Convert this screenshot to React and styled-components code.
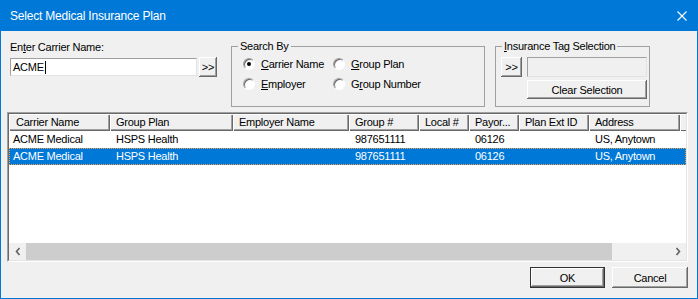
import React from "react";
import styled, { createGlobalStyle } from "styled-components";

const GlobalStyle = createGlobalStyle`
  * {
    box-sizing: border-box;
  }
  html, body {
    margin: 0;
    padding: 0;
    background: #f0f0f0;
  }
  body {
    font-family: "Liberation Sans", Arial, sans-serif;
    font-size: 11px;
    letter-spacing: -0.25px;
    color: #000;
  }
`;

const Window = styled.div`
  width: 698px;
  height: 299px;
  border: 1px solid #0078d7;
  display: flex;
  flex-direction: column;
  background: #f0f0f0;
`;

const TitleBar = styled.div`
  height: 30px;
  flex: none;
  background: #0078d7;
  color: #fff;
  display: flex;
  align-items: center;
  justify-content: space-between;
  padding-left: 9px;
  font-size: 12px;
  letter-spacing: -0.2px;
`;

const CloseBox = styled.div`
  width: 30px;
  height: 30px;
  display: flex;
  align-items: center;
  justify-content: center;
  margin-top: -1px;
`;

const Body = styled.div`
  flex: 1;
  display: flex;
  flex-direction: column;
  padding: 9px 9px 0 6px;
`;

const TopRow = styled.div`
  display: flex;
  align-items: flex-start;
  height: 67px;
`;

const CarrierBlock = styled.div`
  margin: 1px 0 0 3px;
  display: flex;
  flex-direction: column;
`;

const Label = styled.div`
  line-height: 13px;
  height: 13px;
`;

const Accel = styled.span`
  text-decoration: underline;
  text-underline-offset: 1px;
`;

const EntryRow = styled.div`
  margin-top: 3px;
  display: flex;
  align-items: center;
  gap: 2px;
`;

const EditBox = styled.div`
  width: ${({ $w }) => $w}px;
  height: ${({ $h }) => $h}px;
  background: ${({ $disabled }) => ($disabled ? "#f0f0f0" : "#fff")};
  border: 1px solid;
  border-color: #a0a0a0 #e3e3e3 #e3e3e3 #a0a0a0;
  display: flex;
  align-items: center;
  padding-left: 2px;
  line-height: 13px;
`;

const Caret = styled.span`
  display: inline-block;
  width: 1px;
  height: 13px;
  background: #000;
  margin-left: 1px;
`;

const Button = styled.button`
  font: inherit;
  letter-spacing: inherit;
  color: #000;
  background: #f0f0f0;
  padding: 0;
  width: ${({ $w }) => $w}px;
  height: ${({ $h }) => $h}px;
  border: ${({ $default }) => ($default ? "1px solid #333" : "none")};
  box-shadow: inset -1px -1px #696969, inset 1px 1px #fff,
    inset -2px -2px #a0a0a0, inset 2px 2px #f0f0f0;
  display: flex;
  align-items: center;
  justify-content: center;
  cursor: default;
`;

const Group = styled.fieldset`
  margin: 0 0 0 ${({ $ml }) => $ml}px;
  width: ${({ $w }) => $w}px;
  height: 67px;
  border: 1px solid #a0a0a0;
  padding: ${({ $pt }) => $pt}px 0 0 0;
  min-width: 0;
`;

const Legend = styled.legend`
  margin-left: 6px;
  padding: 0 2px;
  line-height: 13px;
`;

const RadioGrid = styled.div`
  margin-left: 11px;
  display: grid;
  grid-template-columns: 90px auto;
  row-gap: 4px;
`;

const RadioOption = styled.label`
  display: flex;
  align-items: center;
  gap: 6px;
  height: 16px;
`;

const RadioCircle = styled.span`
  width: 12px;
  height: 12px;
  border-radius: 50%;
  background: #fff;
  border: 1px solid;
  border-color: #a0a0a0 #fff #fff #a0a0a0;
  box-shadow: inset 1px 1px 0 #696969;
  display: flex;
  align-items: center;
  justify-content: center;
  &::after {
    content: "";
    width: 4px;
    height: 4px;
    border-radius: 50%;
    background: ${({ $checked }) => ($checked ? "#000" : "transparent")};
  }
`;

const TagGrid = styled.div`
  margin-left: 5px;
  display: grid;
  grid-template-columns: 21px 120px;
  column-gap: 5px;
  row-gap: 3px;
`;

const ListView = styled.div`
  margin-top: 5px;
  height: 150px;
  border: 1px solid;
  border-color: #a0a0a0 #fff #fff #a0a0a0;
  display: flex;
  flex-direction: column;
  background: #fff;
`;

const ListInner = styled.div`
  flex: 1;
  border: 1px solid;
  border-color: #696969 #e3e3e3 #e3e3e3 #696969;
  display: flex;
  flex-direction: column;
  overflow: hidden;
`;

const HeaderRow = styled.div`
  display: flex;
  height: 17px;
  flex: none;
  background: #f0f0f0;
`;

const HeaderCell = styled.div`
  width: ${({ $w }) => $w}px;
  flex: none;
  padding-left: ${({ $first }) => ($first ? 7 : 6)}px;
  line-height: 17px;
  white-space: nowrap;
  overflow: hidden;
  box-shadow: inset 1px 1px #fff, inset -1px -1px #696969,
    inset -2px -2px #a0a0a0;
`;

const HeaderRest = styled.div`
  flex: 1;
  box-shadow: inset 1px 1px #fff, inset 0 -1px #696969;
`;

const Row = styled.div`
  display: flex;
  height: 17px;
  flex: none;
  background: ${({ $selected }) => ($selected ? "#0078d7" : "#fff")};
  color: ${({ $selected }) => ($selected ? "#fff" : "#000")};
  outline: ${({ $selected }) => ($selected ? "1px dotted #f0a050" : "none")};
  outline-offset: -1px;
`;

const Cell = styled.div`
  width: ${({ $w }) => $w}px;
  flex: none;
  padding-left: ${({ $first }) => ($first ? 4 : 6)}px;
  line-height: 17px;
  white-space: nowrap;
  overflow: hidden;
`;

const ListSpace = styled.div`
  flex: 1;
  background: #fff;
`;

const ScrollBar = styled.div`
  height: 17px;
  flex: none;
  background: #f0f0f0;
  display: flex;
  align-items: stretch;
`;

const ScrollArrow = styled.div`
  width: 17px;
  flex: none;
  display: flex;
  align-items: center;
  justify-content: center;
`;

const Track = styled.div`
  flex: 1;
  display: flex;
  padding-right: 57px;
`;

const Thumb = styled.div`
  flex: 1;
  background: #cdcdcd;
`;

const Footer = styled.div`
  margin-top: 5px;
  display: flex;
  justify-content: flex-end;
  gap: 7px;
`;

const columns = [
  { key: "carrier", title: "Carrier Name", w: 101 },
  { key: "plan", title: "Group Plan", w: 123 },
  { key: "employer", title: "Employer Name", w: 116 },
  { key: "group", title: "Group #", w: 70 },
  { key: "local", title: "Local #", w: 50 },
  { key: "payor", title: "Payor...", w: 50 },
  { key: "ext", title: "Plan Ext ID", w: 70 },
  { key: "address", title: "Address", w: 91 },
];

const rows = [
  {
    carrier: "ACME Medical",
    plan: "HSPS Health",
    employer: "",
    group: "987651111",
    local: "",
    payor: "06126",
    ext: "",
    address: "US, Anytown",
  },
  {
    carrier: "ACME Medical",
    plan: "HSPS Health",
    employer: "",
    group: "987651111",
    local: "",
    payor: "06126",
    ext: "",
    address: "US, Anytown",
    selected: true,
  },
];

const Radio = ({ checked, children }) => (
  <RadioOption>
    <RadioCircle $checked={checked} />
    <span>{children}</span>
  </RadioOption>
);

const Chevron = ({ dir }) => (
  <svg width="6" height="9" viewBox="0 0 6 9">
    <path
      d={dir === "left" ? "M4.5 1 L1.5 4.5 L4.5 8" : "M1.5 1 L4.5 4.5 L1.5 8"}
      fill="none"
      stroke="#606060"
      strokeWidth="1.6"
    />
  </svg>
);

const App = () => {
  return (
    <>
      <GlobalStyle />
      <Window>
        <TitleBar>
          <span>Select Medical Insurance Plan</span>
          <CloseBox>
            <svg width="10" height="10" viewBox="0 0 10 10">
              <path d="M0.5 0.5 L9.5 9.5 M9.5 0.5 L0.5 9.5" stroke="#fff" strokeWidth="1.1" />
            </svg>
          </CloseBox>
        </TitleBar>
        <Body>
          <TopRow>
            <CarrierBlock>
              <Label>
                En<Accel>t</Accel>er Carrier Name:
              </Label>
              <EntryRow>
                <EditBox $w={187} $h={18}>
                  ACME
                  <Caret />
                </EditBox>
                <Button $w={18} $h={20}>&gt;&gt;</Button>
              </EntryRow>
            </CarrierBlock>

            <Group $ml={14} $w={254} $pt={3}>
              <Legend>Search By</Legend>
              <RadioGrid>
                <Radio checked>
                  <Accel>C</Accel>arrier Name
                </Radio>
                <Radio>
                  <Accel>G</Accel>roup Plan
                </Radio>
                <Radio>
                  <Accel>E</Accel>mployer
                </Radio>
                <Radio>
                  G<Accel>r</Accel>oup Number
                </Radio>
              </RadioGrid>
            </Group>

            <Group $ml={10} $w={155} $pt={4}>
              <Legend>
                <Accel>I</Accel>nsurance Tag Selection
              </Legend>
              <TagGrid>
                <Button $w={21} $h={20}>&gt;&gt;</Button>
                <EditBox $disabled $w={120} $h={20} />
                <span />
                <Button $w={120} $h={19}>Clear Selection</Button>
              </TagGrid>
            </Group>
          </TopRow>

          <ListView>
            <ListInner>
              <HeaderRow>
                {columns.map((c, i) => (
                  <HeaderCell key={c.key} $w={c.w} $first={i === 0}>
                    {c.title}
                  </HeaderCell>
                ))}
                <HeaderRest />
              </HeaderRow>
              {rows.map((r, idx) => (
                <Row key={idx} $selected={r.selected}>
                  {columns.map((c, i) => (
                    <Cell key={c.key} $w={c.w} $first={i === 0}>
                      {r[c.key]}
                    </Cell>
                  ))}
                </Row>
              ))}
              <ListSpace />
              <ScrollBar>
                <ScrollArrow>
                  <Chevron dir="left" />
                </ScrollArrow>
                <Track>
                  <Thumb />
                </Track>
                <ScrollArrow>
                  <Chevron dir="right" />
                </ScrollArrow>
              </ScrollBar>
            </ListInner>
          </ListView>

          <Footer>
            <Button $w={75} $h={21} $default>OK</Button>
            <Button $w={76} $h={21}>Cancel</Button>
          </Footer>
        </Body>
      </Window>
    </>
  );
};

export default App;
